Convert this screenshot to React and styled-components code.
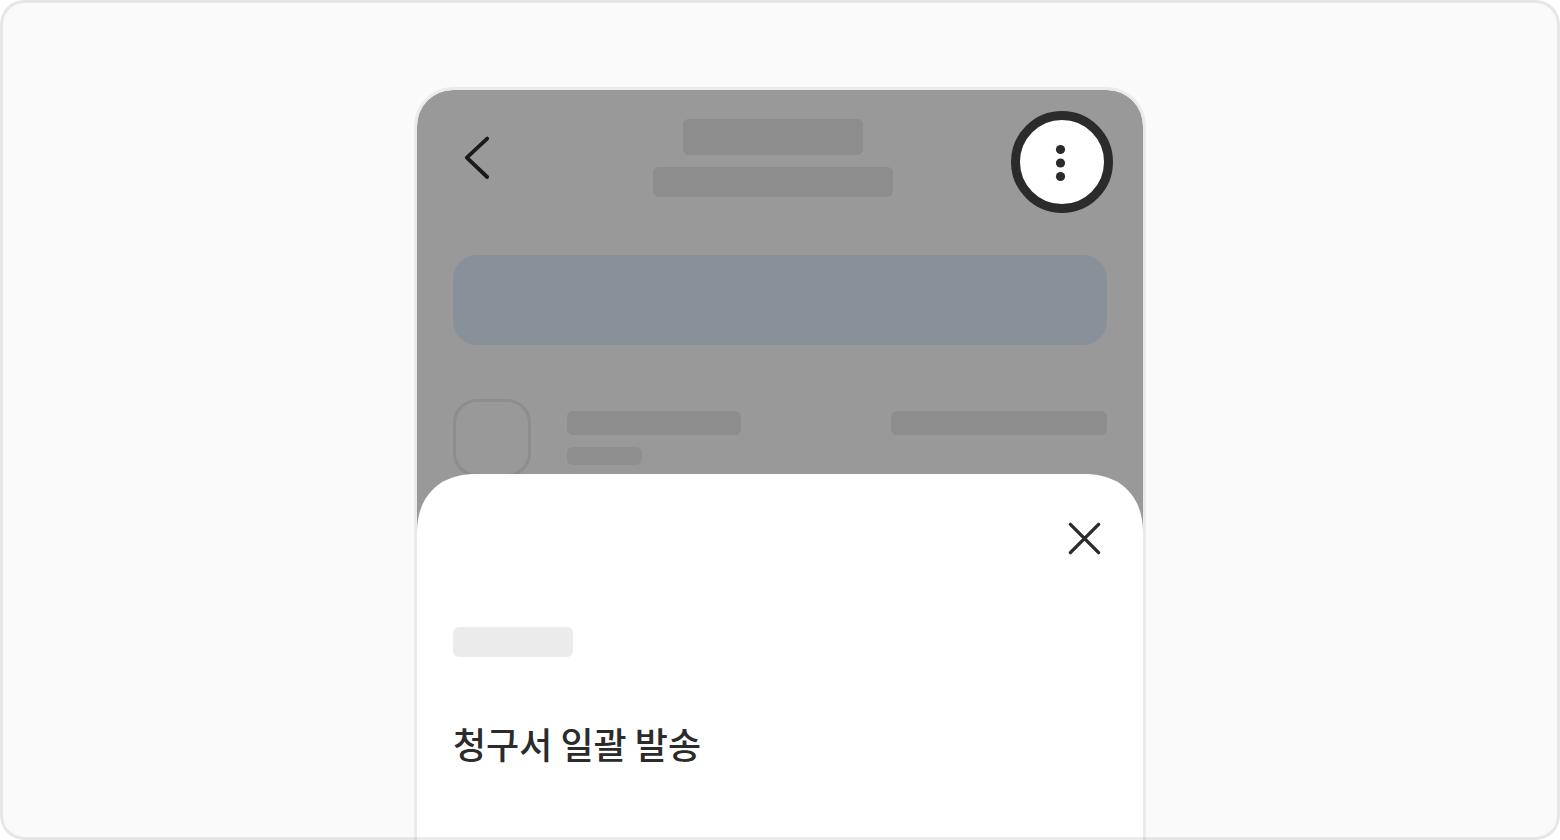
import React from "react";
import styled, { createGlobalStyle } from "styled-components";

export default function App() {
  return (
    <>
      <GlobalStyle />
      <Stage>
        <Phone>
          <Header>
            <IconButton type="button" aria-label="뒤로">
              <svg width="102" height="102" viewBox="0 0 102 102" fill="none">
                <path
                  d="M54.2 27.6L33.8 46.6L54.2 66"
                  stroke="#1a1a1a"
                  strokeWidth="3.8"
                  strokeLinecap="round"
                  strokeLinejoin="round"
                />
              </svg>
            </IconButton>
            <Titles>
              <Bar $w={180} $h={36} />
              <Bar $w={240} $h={30} />
            </Titles>
            <MoreButton type="button" aria-label="더보기">
              <svg width="84" height="84" viewBox="0 0 84 84" fill="#2b2b2b">
                <circle cx="40.5" cy="29.5" r="4.6" />
                <circle cx="40.5" cy="43" r="4.6" />
                <circle cx="40.5" cy="56.5" r="4.6" />
              </svg>
            </MoreButton>
          </Header>
          <Banner />
          <Row>
            <Avatar />
            <RowText>
              <Bar $w={174} $h={24} />
              <Bar $w={75} $h={18} $color="#8f8f8f" />
            </RowText>
            <RowText>
              <Bar $w={216} $h={24} />
            </RowText>
          </Row>
          <Sheet>
            <CloseButton type="button" aria-label="닫기">
              <svg width="45" height="45" viewBox="0 0 45 45" fill="none">
                <path
                  d="M8.4 8.4L36.6 36.6M36.6 8.4L8.4 36.6"
                  stroke="#2b2b2b"
                  strokeWidth="3.4"
                  strokeLinecap="round"
                />
              </svg>
            </CloseButton>
            <Bar $w={120} $h={30} $color="#ebebeb" />
            <MenuItem type="button">청구서 일괄 발송</MenuItem>
          </Sheet>
        </Phone>
      </Stage>
    </>
  );
}

const GlobalStyle = createGlobalStyle`
  * {
    box-sizing: border-box;
  }
  body {
    margin: 0;
    background-color: #fff;
    font-family: "Noto Sans CJK KR", "Noto Sans", sans-serif;
  }
  button {
    border: none;
    padding: 0;
    background: none;
    font-family: inherit;
    cursor: pointer;
  }
  svg {
    display: block;
  }
`;

const Stage = styled.main`
  position: relative;
  display: flex;
  justify-content: center;
  height: 100vh;
  padding-top: 87px;
  border-radius: 24px;
  background-color: #fafafa;
  overflow: hidden;
  /* outline stays above the phone */
  &::after {
    content: "";
    position: absolute;
    inset: 0;
    border: 3px solid rgba(0, 0, 0, 0.08);
    border-radius: 24px;
    pointer-events: none;
  }
`;

const Phone = styled.section`
  display: flex;
  flex-direction: column;
  width: 100%;
  max-width: 732px;
  border: 3px solid #ebebeb;
  border-bottom: none;
  border-radius: 39px 39px 0 0;
  background-color: #999;
  background-clip: padding-box;
  overflow: hidden;
`;

const Header = styled.header`
  display: grid;
  grid-template-columns: 102px 1fr 102px;
  padding: 21px 30px 0 16px;
`;

const IconButton = styled.button`
  width: 102px;
  height: 102px;
`;

const MoreButton = styled(IconButton)`
  border: 9px solid #2b2b2b;
  border-radius: 50%;
  background-color: #fff;
`;

const Titles = styled.div`
  display: flex;
  flex-direction: column;
  align-items: center;
  gap: 12px;
  padding-top: 8px;
`;

const Bar = styled.div`
  width: ${({ $w }) => $w}px;
  max-width: 100%;
  height: ${({ $h }) => $h}px;
  border-radius: 6px;
  background-color: ${({ $color }) => $color || "#8d8d8d"};
`;

const Banner = styled.div`
  flex-shrink: 0;
  height: 90px;
  margin: 42px 36px 0;
  border-radius: 24px;
  background-color: #889099;
`;

const Row = styled.div`
  display: flex;
  gap: 36px;
  padding: 54px 36px 0;
`;

const Avatar = styled.div`
  flex-shrink: 0;
  width: 78px;
  height: 78px;
  border: 3px solid #8d8d8d;
  border-radius: 24px;
`;

const RowText = styled.div`
  display: flex;
  flex-direction: column;
  gap: 12px;
  padding-top: 12px;
  &:last-child {
    margin-left: auto;
  }
`;

const Sheet = styled.div`
  position: relative;
  flex: 1;
  display: flex;
  flex-direction: column;
  align-items: flex-start;
  /* covers the bottom edge of the row */
  margin-top: -3px;
  padding: 42px 36px 0;
  border-radius: 50px 50px 0 0;
  background-color: #fff;
  /* smoother corner where the browser has it */
  @supports (corner-shape: superellipse(1.2)) {
    border-radius: 60px 60px 0 0;
    corner-shape: superellipse(1.2);
  }
`;

const CloseButton = styled.button`
  align-self: flex-end;
  width: 45px;
  height: 45px;
  margin-bottom: 66px;
`;

const MenuItem = styled.button`
  margin-top: 60px;
  font-size: 36px;
  font-weight: 500;
  line-height: 52px;
  color: #2b2b2b;
`;
